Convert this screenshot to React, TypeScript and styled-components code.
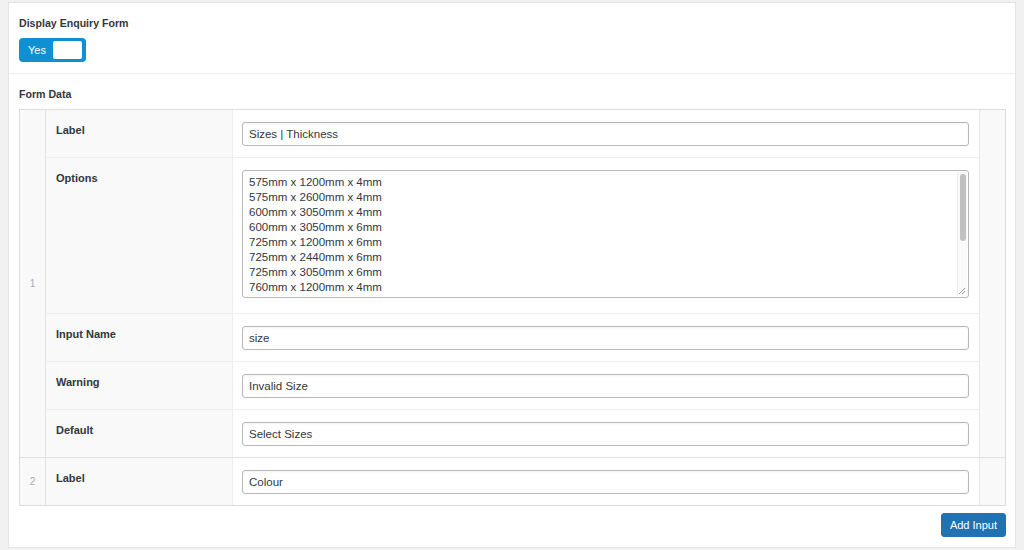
import React from "react";
import styled, { createGlobalStyle } from "styled-components";

const Global = createGlobalStyle`
  html, body { margin: 0; padding: 0; background: #f1f1f1; }
  body { font-family: "Liberation Sans", Arial, Helvetica, sans-serif; color: #23282d; }
  * { box-sizing: border-box; }
`;

const Page = styled.div`
  padding: 2px 8px 0 8px;
  height: 550px;
  overflow: hidden;
`;

const Panel = styled.div`
  background: #fff;
  border: 1px solid #e2e4e7;
  height: 546px;
`;

const Section = styled.div<{ $border?: boolean }>`
  padding: ${(p) => (p.$border ? "13px 10px 11px" : "13px 9px 10px 10px")};
  border-bottom: ${(p) => (p.$border ? "1px solid #eeeeee" : "none")};
`;

const FieldTitle = styled.div`
  font-size: 10.6px;
  font-weight: 700;
  color: #32373c;
  line-height: 14px;
  margin-bottom: 8px;
`;

const Toggle = styled.div`
  width: 67px;
  height: 24px;
  border-radius: 4px;
  background: #0e90d2;
  display: flex;
  align-items: center;
  justify-content: space-between;
  padding: 3px 4px 3px 9px;
`;

const ToggleText = styled.span`
  color: #fff;
  font-size: 11px;
  line-height: 14px;
`;

const Knob = styled.span`
  width: 29px;
  height: 18px;
  background: #fff;
  border-radius: 2px;
`;

const Table = styled.div`
  border: 1px solid #dcdcde;
`;

const Group = styled.div<{ $last?: boolean }>`
  display: flex;
  border-bottom: ${(p) => (p.$last ? "none" : "1px solid #e1e1e1")};
`;

const NumCell = styled.div`
  width: 26px;
  flex: none;
  background: #f9f9f9;
  border-right: 1px solid #e1e1e1;
  display: flex;
  align-items: center;
  justify-content: center;
  font-size: 10px;
  color: #aaaaaa;
`;

const Fields = styled.div`
  flex: 1;
  display: flex;
  flex-direction: column;
`;

const TailCell = styled.div`
  width: 26px;
  flex: none;
  background: #f9f9f9;
  border-left: 1px solid #e8e8e8;
`;

const FieldRow = styled.div<{ $last?: boolean }>`
  display: flex;
  border-bottom: ${(p) => (p.$last ? "none" : "1px solid #eeeeee")};
`;

const LabelCell = styled.div`
  width: 187px;
  flex: none;
  background: #f9f9f9;
  border-right: 1px solid #eeeeee;
  padding: 13px 10px 10px;
  font-size: 11px;
  font-weight: 700;
  line-height: 14px;
  color: #32373c;
`;

const InputCell = styled.div<{ $tall?: boolean }>`
  flex: 1;
  padding: ${(p) => (p.$tall ? "12px 10px 15px 9px" : "12px 10px 11px 9px")};
`;

const TextInput = styled.div`
  height: 24px;
  border: 1px solid #b4b9be;
  border-radius: 3px;
  padding: 0 6px;
  display: flex;
  align-items: center;
  font-size: 11.5px;
  color: #32373c;
  box-shadow: inset 0 1px 2px rgba(0, 0, 0, 0.05);
`;

const TextArea = styled.div`
  position: relative;
  height: 128px;
  border: 1px solid #b4b9be;
  border-radius: 3px;
  padding: 4px 6px;
  font-size: 11.5px;
  line-height: 15px;
  color: #32373c;
  overflow: hidden;
`;

const ScrollTrack = styled.div`
  position: absolute;
  top: 1px;
  right: 1px;
  bottom: 1px;
  width: 10px;
  background: #fafafa;
  border-left: 1px solid #eeeeee;
`;

const ScrollThumb = styled.div`
  position: absolute;
  top: 2px;
  left: 2px;
  width: 6px;
  height: 67px;
  border-radius: 3px;
  background: #c1c1c1;
`;

const Grip = styled.svg`
  position: absolute;
  right: 2px;
  bottom: 2px;
`;

const Footer = styled.div`
  display: flex;
  justify-content: flex-end;
  padding-top: 7px;
`;

const Button = styled.button`
  font-family: inherit;
  background: #2271b1;
  color: #fff;
  border: 1px solid #2271b1;
  border-radius: 3px;
  height: 24px;
  padding: 0 8px;
  font-size: 11px;
  line-height: 22px;
`;

const options = [
  "575mm x 1200mm x 4mm",
  "575mm x 2600mm x 4mm",
  "600mm x 3050mm x 4mm",
  "600mm x 3050mm x 6mm",
  "725mm x 1200mm x 6mm",
  "725mm x 2440mm x 6mm",
  "725mm x 3050mm x 6mm",
  "760mm x 1200mm x 4mm",
];

export default function App() {
  return (
    <>
      <Global />
      <Page>
        <Panel>
          <Section $border>
            <FieldTitle>Display Enquiry Form</FieldTitle>
            <Toggle>
              <ToggleText>Yes</ToggleText>
              <Knob />
            </Toggle>
          </Section>
          <Section>
            <FieldTitle>Form Data</FieldTitle>
            <Table>
              <Group>
                <NumCell>1</NumCell>
                <Fields>
                  <FieldRow>
                    <LabelCell>Label</LabelCell>
                    <InputCell>
                      <TextInput>Sizes | Thickness</TextInput>
                    </InputCell>
                  </FieldRow>
                  <FieldRow>
                    <LabelCell>Options</LabelCell>
                    <InputCell $tall>
                      <TextArea>
                        {options.map((o) => (
                          <div key={o}>{o}</div>
                        ))}
                        <ScrollTrack>
                          <ScrollThumb />
                        </ScrollTrack>
                        <Grip width="8" height="8" viewBox="0 0 8 8">
                          <path d="M7 1 L1 7 M7 4 L4 7" stroke="#999" strokeWidth="1" />
                        </Grip>
                      </TextArea>
                    </InputCell>
                  </FieldRow>
                  <FieldRow>
                    <LabelCell>Input Name</LabelCell>
                    <InputCell>
                      <TextInput>size</TextInput>
                    </InputCell>
                  </FieldRow>
                  <FieldRow>
                    <LabelCell>Warning</LabelCell>
                    <InputCell>
                      <TextInput>Invalid Size</TextInput>
                    </InputCell>
                  </FieldRow>
                  <FieldRow $last>
                    <LabelCell>Default</LabelCell>
                    <InputCell>
                      <TextInput>Select Sizes</TextInput>
                    </InputCell>
                  </FieldRow>
                </Fields>
                <TailCell />
              </Group>
              <Group $last>
                <NumCell>2</NumCell>
                <Fields>
                  <FieldRow $last>
                    <LabelCell>Label</LabelCell>
                    <InputCell>
                      <TextInput>Colour</TextInput>
                    </InputCell>
                  </FieldRow>
                </Fields>
                <TailCell />
              </Group>
            </Table>
            <Footer>
              <Button>Add Input</Button>
            </Footer>
          </Section>
        </Panel>
      </Page>
    </>
  );
}
